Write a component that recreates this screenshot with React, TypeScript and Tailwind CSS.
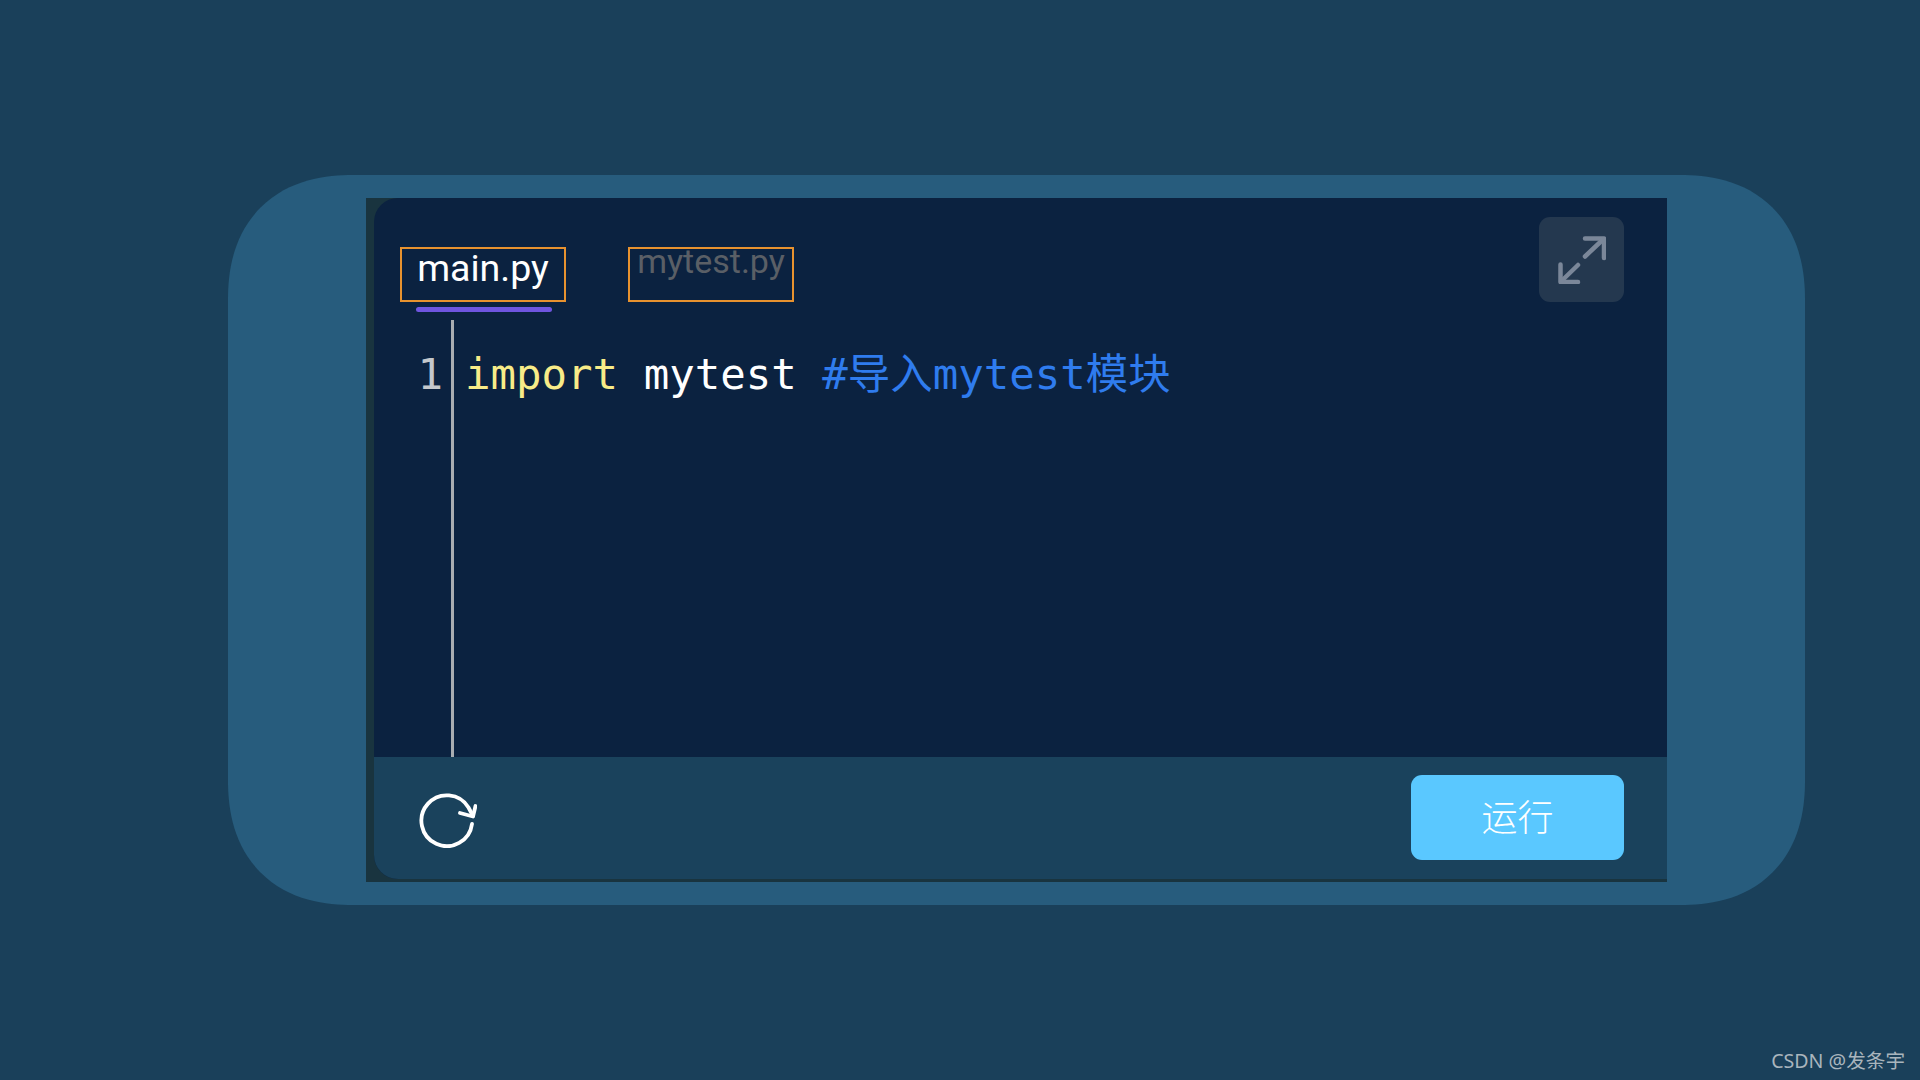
import React from "react";

const ExpandIcon = () => (
  <svg width="48" height="48" viewBox="0 0 48 48" fill="none" stroke="#7b8799" strokeWidth="4.5" strokeLinecap="round" strokeLinejoin="round">
    <path d="M27 2.5H46V22" />
    <path d="M45 3.5L27 20.5" />
    <path d="M2.5 28.5V46H20" />
    <path d="M3.5 45L20 29" />
  </svg>
);

const ResetIcon = () => (
  <svg width="58" height="56" viewBox="0 0 58 56" fill="none" stroke="#fff" strokeWidth="3.8" strokeLinecap="round" strokeLinejoin="round">
    <path d="M53 32A25.4 25.4 0 1 1 49.5 15.5L54 24" />
    <path d="M41 21L54 24.5L56.5 14" />
  </svg>
);

export default function App() {
  return (
    <div className="relative h-[1080px] w-full overflow-hidden bg-[#1a405a] pl-[228px] pt-[175px] font-['Roboto',sans-serif]">
      <div className="h-[730px] w-[1577px] rounded-[125px] bg-[#275c7d] pl-[138px] pt-[23px] [corner-shape:superellipse(1.2)]">
        <div className="h-[684px] w-[1301px] bg-[#19343f] pb-[3px] pl-[8px]">
          <div className="flex h-full flex-col overflow-hidden rounded-l-[24px] bg-[#0b2240]">
            <div className="flex-1">
              <div className="flex items-start justify-between pl-[26px] pr-[43px] pt-[19px]">
                <div className="flex gap-[62px] pt-[30px]">
                  <div className="flex flex-col">
                    <div className="h-[55px] w-[166px] border-2 border-[#e8922f] text-center text-[37.5px] leading-[39px] text-white">
                      main.py
                    </div>
                    <div className="ml-[16px] mt-[5px] h-[5px] w-[136px] rounded-full bg-[#6f55e0]" />
                  </div>
                  <div className="h-[55px] w-[166px] border-2 border-[#e8922f] text-center text-[34px] leading-[25px] text-[#5a5f66]">
                    mytest.py
                  </div>
                </div>
                <button className="flex h-[85px] w-[85px] items-center justify-center rounded-[11px] bg-[#24384f]">
                  <ExpandIcon />
                </button>
              </div>
              <div className="ml-[26px] mt-[8px] flex h-[437px] font-['DejaVu_Sans_Mono','Noto_Sans_CJK_SC',monospace] text-[42.4px] leading-[50px]">
                <div className="w-[43px] pt-[30px] text-right text-[#c4c8cc]">1</div>
                <div className="ml-[8px] w-[3px] bg-[#a9adb1]" />
                <div className="whitespace-pre pl-[11px] pt-[30px] text-white">
                  <span className="text-[#f8ec88]">import</span> mytest{" "}
                  <span className="text-[#2f7cee]">#导入mytest模块</span>
                </div>
              </div>
            </div>
            <div className="flex h-[122px] items-center justify-between bg-[#1a425c] pl-[45px] pr-[43px]">
              <div className="pt-[4px]">
                <ResetIcon />
              </div>
              <button className="mb-[1px] flex h-[85px] w-[213px] items-center justify-center rounded-[11px] bg-[#5ac8ff] pb-[5px] font-['Noto_Sans_CJK_SC',sans-serif] text-[36px] font-light text-white">
                运行
              </button>
            </div>
          </div>
        </div>
      </div>
      <div className="absolute bottom-[6px] right-[15px] font-['Noto_Sans','Noto_Sans_CJK_SC',sans-serif] text-[19.6px] leading-[26px] text-[#a9b5bd]">
        CSDN @发条宇
      </div>
    </div>
  );
}
